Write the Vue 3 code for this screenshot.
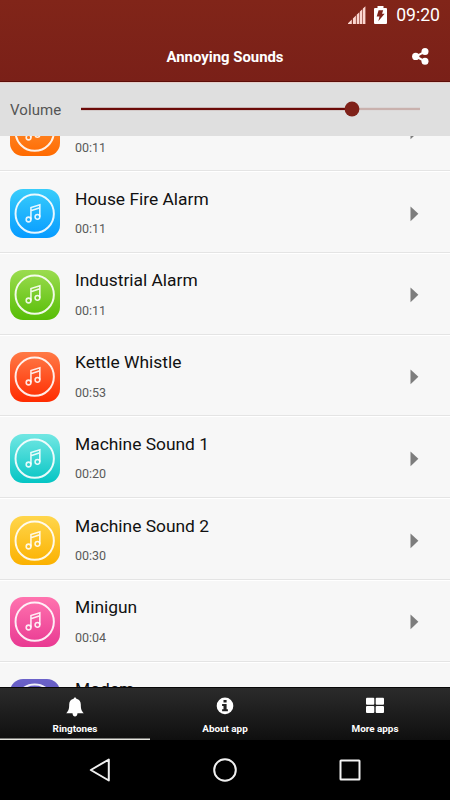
<script setup>
const sounds = [
  { name: 'Fire Alarm', time: '00:11', tone: 'orange' },
  { name: 'House Fire Alarm', time: '00:11', tone: 'blue' },
  { name: 'Industrial Alarm', time: '00:11', tone: 'green' },
  { name: 'Kettle Whistle', time: '00:53', tone: 'red' },
  { name: 'Machine Sound 1', time: '00:20', tone: 'teal' },
  { name: 'Machine Sound 2', time: '00:30', tone: 'yellow' },
  { name: 'Minigun', time: '00:04', tone: 'pink' },
  { name: 'Modem', time: '', tone: 'purple' },
]
const tabs = [
  { label: 'Ringtones', icon: 'bell', active: true },
  { label: 'About app', icon: 'info', active: false },
  { label: 'More apps', icon: 'grid', active: false },
]
</script>

<template>
  <div class="screen">
    <header class="top">
      <div class="status">
        <svg class="signal" width="18" height="18" viewBox="0 0 18 18">
          <path d="M0 18V17.3L3.8 13.6V18zM4.9 18V12.4L7.9 9.6V18zM8.7 18V8.8L11.3 6.2V18zM11.9 18V5.6L14.3 3.2V18zM14.9 18V2.6L17.4 0.2V18z" fill="#fbd6d0" />
        </svg>
        <svg class="battery" width="13" height="18" viewBox="0 0 13 18">
          <path d="M3.5 0h6v2H12q1 0 1 1v14q0 1-1 1H1q-1 0-1-1V3q0-1 1-1h2.5z" fill="#fff" />
          <path d="M4.6 4.3H9.2L8 7.8H10.6L4.3 15.3L5.5 10.6H2.7z" fill="#7f231a" />
        </svg>
        <span class="clock">09:20</span>
      </div>
      <div class="bar">
        <h1>Annoying Sounds</h1>
        <svg class="share" width="17" height="17" viewBox="0 0 17 17">
          <path d="M13 3.6L4 8.4L13 13.4" fill="none" stroke="#fff" stroke-width="2.2" />
          <circle cx="13" cy="3.6" r="3.5" fill="#fff" />
          <circle cx="3.7" cy="8.4" r="3.6" fill="#fff" />
          <circle cx="13" cy="13.3" r="3.5" fill="#fff" />
        </svg>
      </div>
    </header>

    <section class="volume">
      <span class="vlabel">Volume</span>
      <svg class="slider" width="339" height="16" viewBox="0 0 339 16">
        <rect x="0" y="6.8" width="271" height="2.3" fill="#6b0a08" />
        <rect x="271" y="6.8" width="68" height="2.3" fill="#c9b1ad" />
        <circle cx="271" cy="8" r="7.4" fill="#7f2119" />
      </svg>
    </section>

    <main class="viewport">
      <ul class="list">
        <li v-for="s in sounds" :key="s.name" class="row">
          <div class="tile" :class="s.tone">
            <svg width="49.4" height="49.4" viewBox="0 0 50 50" fill="none" stroke="#fff">
              <circle cx="25" cy="25" r="19.4" stroke-width="2" stroke-opacity=".9" />
              <g stroke-width="1.6" stroke-opacity=".88">
                <circle cx="18.8" cy="30.9" r="2.4" />
                <circle cx="27.8" cy="28.2" r="2.4" />
                <path d="M21.2 30.9V18.7L30.2 15.9V28.2M21.2 21.9L30.2 19.1" />
              </g>
            </svg>
          </div>
          <div class="info">
            <div class="name">{{ s.name }}</div>
            <div class="time">{{ s.time }}</div>
          </div>
          <svg class="play" width="9" height="16" viewBox="0 0 9 16">
            <path d="M.5.5L8.400 7.800L.5 15.200z" fill="#7d7d7d" />
          </svg>
        </li>
      </ul>
    </main>

    <nav class="tabs">
      <div v-for="t in tabs" :key="t.label" class="tab" :class="{ active: t.active }">
        <svg v-if="t.icon === 'bell'" class="ticon" width="20" height="20" viewBox="0 0 20 20" fill="#fff">
          <path d="M10 .4c.9 0 1.300.6 1.300 1.400C14.400 2.500 15.800 4.800 15.800 7.600c0 4.600.8 6.600 3 8.700H1.200C3.400 14.200 4.200 12.200 4.200 7.600c0-2.800 1.400-5.100 4.500-5.800C8.700 1 9.100.4 10 .4zM7.500 16.200h5c-.2 2.100-1.200 3.200-2.500 3.200s-2.300-1.100-2.500-3.200z" />
        </svg>
        <svg v-else-if="t.icon === 'info'" class="ticon" width="20" height="20" viewBox="0 0 20 20">
          <circle cx="10" cy="8.900" r="8.300" fill="#fff" />
          <path d="M8.500 3h3.100v2.600H8.500zM7.100 7h4.500v5.300h1.300v2H7.100v-2h1.400V8.900H7.100z" fill="#222" />
        </svg>
        <svg v-else class="ticon" width="20" height="20" viewBox="0 0 20 20" fill="#fff">
          <rect x="1" y=".8" width="8.300" height="7" rx="1" />
          <rect x="10.700" y=".8" width="8.300" height="7" rx="1" />
          <rect x="1" y="9" width="8.300" height="7" rx="1" />
          <rect x="10.700" y="9" width="8.300" height="7" rx="1" />
        </svg>
        <span>{{ t.label }}</span>
      </div>
    </nav>

    <footer class="system">
      <svg width="24" height="26" viewBox="0 0 24 26" fill="none" stroke="#f0f0f0" stroke-width="2">
        <path d="M20.800 2.500V23.500L2.800 13z" stroke-linejoin="round" />
      </svg>
      <svg width="24" height="26" viewBox="0 0 24 26" fill="none" stroke="#f0f0f0" stroke-width="2">
        <circle cx="12" cy="13" r="10.800" />
      </svg>
      <svg width="24" height="26" viewBox="0 0 24 26" fill="none" stroke="#f0f0f0" stroke-width="2">
        <rect x="2.500" y="3.500" width="19" height="19" rx=".5" />
      </svg>
    </footer>
  </div>
</template>

<style>
body { margin: 0; }
</style>

<style scoped>
.screen {
  width: 450px;
  height: 800px;
  display: flex;
  flex-direction: column;
  overflow: hidden;
  font-family: Roboto, "Liberation Sans", sans-serif;
  background: #f7f7f7;
}
.top {
  height: 82px;
  flex: none;
  box-sizing: border-box;
  color: #fff;
  background: linear-gradient(#812519, #7a2018);
  border-bottom: 1px solid #5c0d08;
}
.status {
  height: 32px;
  display: flex;
  align-items: flex-start;
  justify-content: flex-end;
  padding-right: 10px;
}
.signal { margin: 6px 8px 0 0; }
.battery { margin: 6px 9px 0 0; }
.clock { font-size: 17.600px; line-height: 31px; }
.bar {
  height: 49px;
  display: grid;
  grid-template-columns: 60px 1fr 60px;
}
h1 {
  grid-column: 2;
  margin: 0;
  text-align: center;
  font-size: 14.900px;
  font-weight: 700;
  line-height: 50px;
}
.share { margin: 16px 0 0 21.500px; }
.volume {
  height: 54px;
  flex: none;
  box-sizing: border-box;
  display: flex;
  align-items: center;
  padding: 0 30px 1px 10px;
  background: #dfdfdf;
  border-top: 1px solid #e5cfca;
}
.vlabel { width: 71px; font-size: 15px; color: #555; letter-spacing: .1px; padding-top: 2px; }
.slider { flex: none; }
.viewport { height: 551px; flex: none; overflow: hidden; }
.list { list-style: none; margin: -46.300px 0 0; padding: 0; }
.row {
  height: 81.700px;
  box-sizing: border-box;
  display: flex;
  align-items: flex-start;
  padding: 16.400px 31px 0 10.300px;
  border-top: 1px solid #fff;
  border-bottom: 1px solid #e4e4e4;
}
.tile { width: 49.400px; height: 49.400px; flex: none; border-radius: 13px; overflow: hidden; }
.tile svg { display: block; }
.orange { background: linear-gradient(#ff9b43, #ff6a00); }
.blue { background: linear-gradient(#39cdfb, #079bff); }
.green { background: linear-gradient(#9bdc4f, #57bd06); }
.red { background: linear-gradient(#ff7a46, #ff2b00); }
.teal { background: linear-gradient(#72e7e3, #05c5c4); }
.yellow { background: linear-gradient(#ffd64c, #fbb100); }
.pink { background: linear-gradient(#ff74af, #e93992); }
.purple { background: linear-gradient(#6b62c9, #4d42b0); }
.info { flex: 1; padding-left: 15.300px; }
.name { font-size: 17.400px; line-height: 21px; color: #111; }
.time { margin-top: 10.500px; font-size: 12.500px; line-height: 18px; color: #5a5a5a; }
.play { margin-top: 17px; }
.tabs {
  height: 53px;
  flex: none;
  box-sizing: border-box;
  display: grid;
  grid-template-columns: repeat(3, 1fr);
  background: linear-gradient(#2b2b2b, #0f0f0f);
  border-top: 1px solid #080808;
}
.tab {
  display: flex;
  flex-direction: column;
  align-items: center;
  color: #fff;
  font-size: 9.900px;
  font-weight: 700;
  line-height: 14px;
}
.tab.active { box-shadow: inset 0 -1.500px #e4e4de; }
.ticon { margin: 9px 0 5px; }
.system {
  height: 60px;
  display: flex;
  justify-content: center;
  align-items: center;
  gap: 101px;
  background: #000;
}
</style>
